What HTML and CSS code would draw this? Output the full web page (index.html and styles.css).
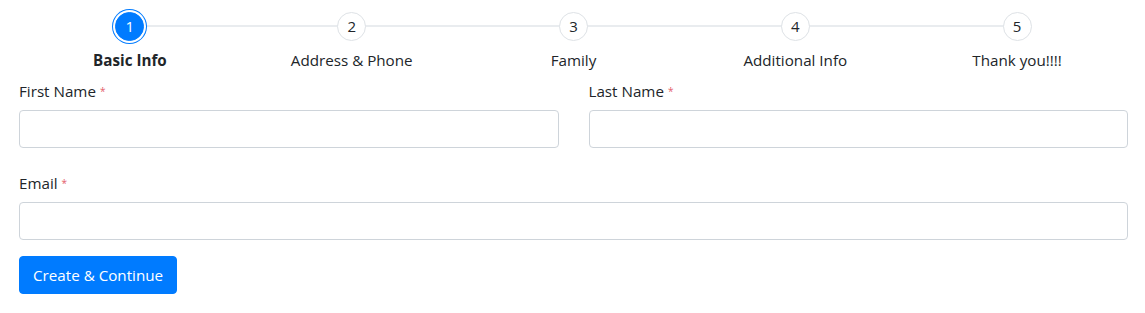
FILE: index.html
```html
<!DOCTYPE html>
<html lang="en">
<head>
<meta charset="utf-8">
<title>Wizard</title>
<link rel="stylesheet" href="styles.css">
</head>
<body>
<div class="page">
  <div class="steps">
    <div class="step active"><div class="circle">1</div><div class="label">Basic Info</div></div>
    <div class="step"><div class="circle">2</div><div class="label">Address &amp; Phone</div></div>
    <div class="step"><div class="circle">3</div><div class="label">Family</div></div>
    <div class="step"><div class="circle">4</div><div class="label">Additional Info</div></div>
    <div class="step"><div class="circle">5</div><div class="label">Thank you!!!!</div></div>
  </div>
  <form class="form">
    <div class="row">
      <div class="group">
        <label class="flabel">First Name <span class="req">*</span></label>
        <input class="input" type="text">
      </div>
      <div class="group">
        <label class="flabel">Last Name <span class="req">*</span></label>
        <input class="input" type="text">
      </div>
    </div>
    <div class="group">
      <label class="flabel">Email <span class="req">*</span></label>
      <input class="input" type="text">
    </div>
    <div class="actions">
      <button class="btn" type="button">Create &amp; Continue</button>
    </div>
  </form>
</div>
</body>
</html>
```
FILE: styles.css
```css
html, body {
  margin: 0;
  padding: 0;
  background: #fff;
}
body {
  font-family: "Open Sans", "Noto Sans", sans-serif;
  font-size: 15.2px;
  color: #212529;
}
.page {
  padding: 0 17px 0 19px;
}
.steps {
  display: flex;
  padding-top: 12px;
}
.step {
  flex: 1;
  position: relative;
  display: flex;
  flex-direction: column;
  align-items: center;
}
.step + .step::before {
  content: "";
  position: absolute;
  top: 13px;
  right: 50%;
  width: 100%;
  height: 2px;
  background: #e9ecef;
  z-index: 0;
}
.circle {
  position: relative;
  z-index: 1;
  box-sizing: border-box;
  width: 29px;
  height: 29px;
  border-radius: 50%;
  border: 1px solid #dee2e6;
  background: #fff;
  display: flex;
  align-items: center;
  justify-content: center;
  font-size: 15px;
  line-height: 1;
  color: #212529;
}
.step.active .circle {
  background: #007bff;
  border-color: #007bff;
  color: #fff;
  box-shadow: 0 0 0 2px #fff, 0 0 0 3px #007bff;
}
.label {
  margin-top: 7px;
  line-height: 24px;
  white-space: nowrap;
}
.step.active .label {
  font-weight: 700;
}
.form {
  margin-top: 7px;
}
.row {
  display: flex;
  gap: 30px;
}
.row .group {
  flex: 1;
  margin-bottom: 23px;
}
.group {
  display: flex;
  flex-direction: column;
  margin-bottom: 24px;
}
.flabel {
  line-height: 24px;
  margin-bottom: 7px;
}
.req {
  color: #e35d6a;
  font-size: 10px;
  vertical-align: 2px;
}
.input {
  box-sizing: border-box;
  height: 38px;
  width: 100%;
  border: 1px solid #ced4da;
  border-radius: 4px;
  padding: 6px 12px;
  font: inherit;
  margin: 0;
}
.group:last-of-type {
  margin-bottom: 16px;
}
.actions {
  margin-top: -8px;
}
.btn {
  height: 38px;
  padding: 0 13px;
  border: 1px solid #007bff;
  border-radius: 4px;
  background: #007bff;
  color: #fff;
  font: inherit;
  cursor: pointer;
}
```
